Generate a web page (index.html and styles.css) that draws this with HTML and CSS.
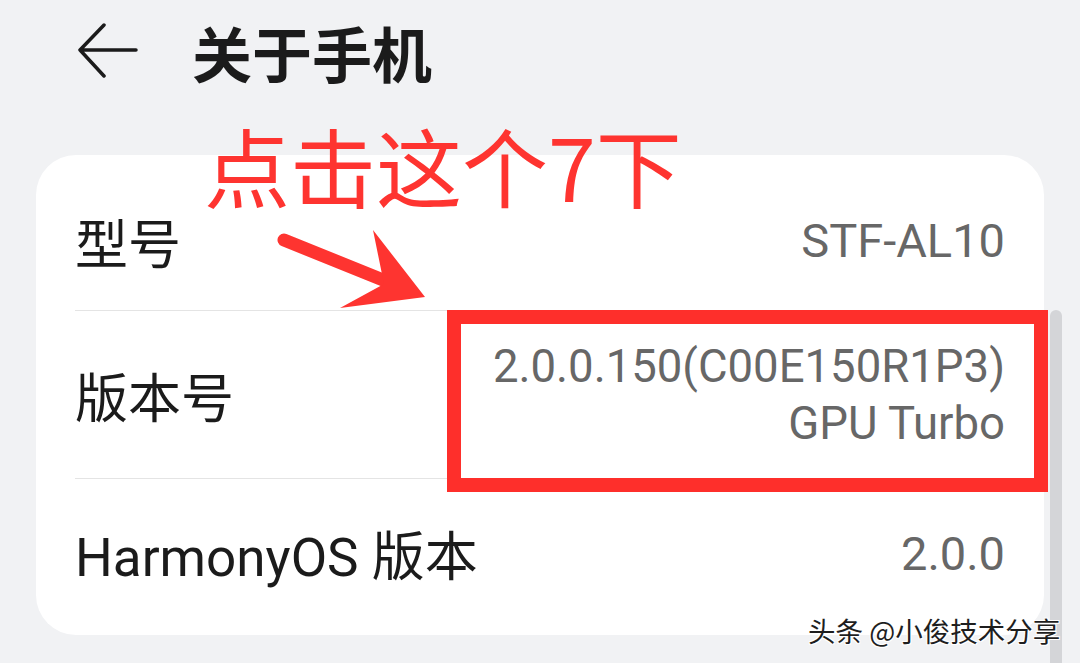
FILE: index.html
```html
<!DOCTYPE html>
<html lang="zh-CN">
<head>
    <meta charset="UTF-8">
    <meta name="viewport" content="width=device-width, initial-scale=1.0">
    <title>关于手机</title>
    <link rel="stylesheet" href="styles.css">
</head>
<body>
    <div class="topbar">
        <svg class="back" width="60" height="60" viewBox="0 0 60 60">
            <path d="M26 3 L2 28 L26 54 M2 28 L58 28" />
        </svg>
        <h1>关于手机</h1>
    </div>

    <div class="card">
        <div class="row row-model">
            <span class="label">型号</span>
            <span class="value">STF-AL10</span>
        </div>
        <div class="row row-build">
            <span class="label">版本号</span>
            <span class="value">2.0.0.150(C00E150R1P3)<br>GPU Turbo</span>
        </div>
        <div class="row row-os">
            <span class="label">HarmonyOS 版本</span>
            <span class="value">2.0.0</span>
        </div>
    </div>

    <!-- annotations drawn over the screenshot -->
    <div class="note">点击这个7下</div>
    <svg class="pointer" width="1080" height="663" viewBox="0 0 1080 663">
        <line x1="284" y1="240" x2="388" y2="282" />
        <polygon points="373,230 425,297 340,308 384,284" />
    </svg>
    <div class="highlight"></div>
    <div class="scrollbar"></div>
    <div class="watermark">头条 @小俊技术分享</div>
</body>
</html>
```

FILE: styles.css
```css
html, body {
    margin: 0;
    height: 100%;
    overflow: hidden;
}
body {
    background-color: #f1f2f4;
    font-family: Roboto, "Noto Sans CJK SC", sans-serif;
    color: #1b1b1b;
    position: relative;
}
.topbar {
    height: 100px;
    display: flex;
    align-items: center;
    padding-left: 78px;
    gap: 54px;
}
.back {
    fill: none;
    stroke: #1b1b1b;
    stroke-width: 3.5;
    stroke-linecap: round;
    stroke-linejoin: round;
    margin-top: 4px;
}
.topbar h1 {
    margin: 4px 0 0 0;
    font-family: "Noto Sans CJK SC", sans-serif;
    font-size: 60px;
    font-weight: 700;
    line-height: 1;
}
.card {
    background: #ffffff;
    border-radius: 40px;
    margin: 55px 36px 0 36px;
    padding: 16px 39px 8px 39px;
}
.row {
    display: flex;
    justify-content: space-between;
    align-items: center;
    border-bottom: 1px solid #e4e4e4;
}
.row-model { height: 139px; }
.row-build { height: 167px; }
.row-os {
    height: 148px;
    border-bottom: none;
}
.label {
    color: #1b1b1b;
    font-size: 53px;
}
.value {
    color: #676767;
    text-align: right;
    font-size: 47px;
}
.row-build .value {
    font-size: 45.5px;
    line-height: 57px;
}
.note {
    position: absolute;
    left: 204px;
    top: 113px;
    font-family: "Noto Sans CJK SC", sans-serif;
    font-size: 86px;
    line-height: 1.2;
    color: #fe3430;
    white-space: nowrap;
}
.pointer {
    position: absolute;
    left: 0;
    top: 0;
}
.pointer line {
    stroke: #fe3430;
    stroke-width: 13;
    stroke-linecap: round;
}
.pointer polygon {
    fill: #fe3430;
}
.highlight {
    position: absolute;
    left: 447px;
    top: 310px;
    width: 573px;
    height: 154px;
    border: 14px solid #fe2f2b;
}
.scrollbar {
    position: absolute;
    left: 1050px;
    top: 310px;
    bottom: 0;
    width: 12px;
    border-radius: 6px 6px 0 0;
    background: #d4d5d8;
}
.watermark {
    position: absolute;
    left: 808px;
    top: 612px;
    font-family: "Noto Sans CJK SC", sans-serif;
    font-size: 27.5px;
    line-height: 36px;
    color: #1e1e1e;
    text-shadow: 1px 1px 0 #fff, -1px -1px 0 #fff, 1px -1px 0 #fff, -1px 1px 0 #fff;
    white-space: nowrap;
}
```
